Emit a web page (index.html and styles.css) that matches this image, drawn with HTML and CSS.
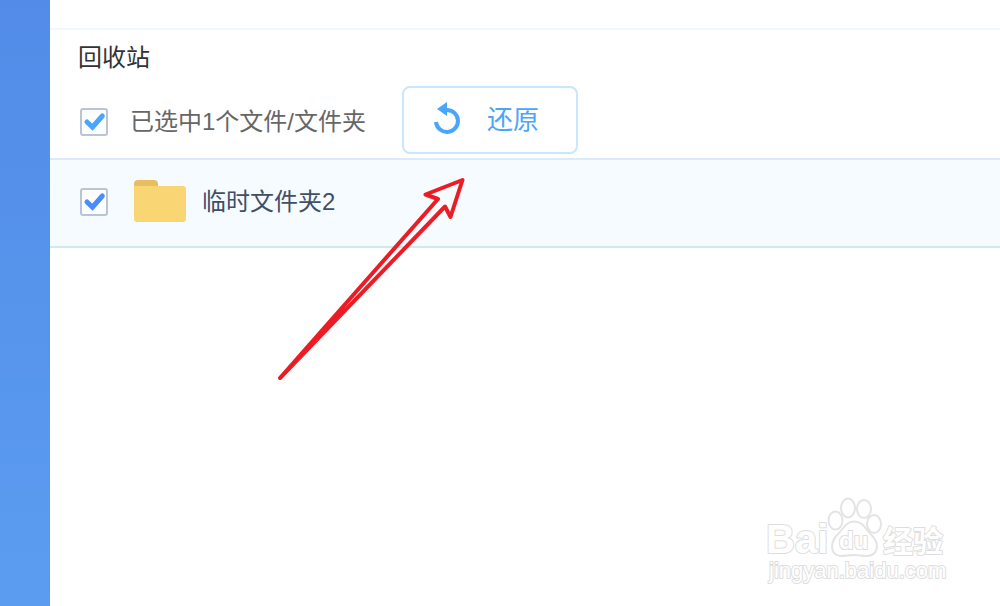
FILE: index.html
```html
<!DOCTYPE html>
<html lang="zh-CN">
<head>
<meta charset="utf-8">
<meta name="viewport" content="width=device-width, initial-scale=1">
<title>回收站</title>
<link rel="stylesheet" href="styles.css">
</head>
<body class="app">
<aside class="sidebar"></aside>
<main class="main">
  <div class="topbar"></div>
  <h1 class="title">回收站</h1>
  <div class="toolbar">
    <span class="check check-all">
      <input class="check-input" type="checkbox" id="all" checked>
      <svg class="check-mark" viewBox="0 0 28 28" aria-hidden="true"><path d="M7 14l5.500 5.200L22.300 8"/></svg>
    </span>
    <label class="toolbar-label" for="all">已选中1个文件/文件夹</label>
    <button class="restore" type="button">
      <svg class="restore-icon" viewBox="0 0 28 36" aria-hidden="true">
        <path class="restore-arc" d="M13 8H14A11 11 0 1 1 3 20"/>
        <path class="restore-head" d="M14 0v14L4 7z"/>
      </svg>
      <span>还原</span>
    </button>
  </div>
  <ul class="files">
    <li class="file">
      <span class="check check-file">
        <input class="check-input" type="checkbox" id="file" checked>
        <svg class="check-mark" viewBox="0 0 28 28" aria-hidden="true"><path d="M7 14l5.500 5.200L22.300 8"/></svg>
      </span>
      <svg class="folder" viewBox="0 0 52 44" aria-hidden="true">
        <path fill="#e7bf61" d="M0 12V5q0-4 4-4h16q4 0 4 4v7z"/>
        <path fill="#f9d673" d="M0 7h49q3 0 3 3v30q0 3-3 3H3q-3 0-3-3z"/>
      </svg>
      <label class="file-name" for="file">临时文件夹2</label>
    </li>
  </ul>
</main>
<svg class="arrow" viewBox="270 170 200 216" aria-hidden="true">
  <path d="M280 378L438 199L425.500 194.500L462.500 180L450.500 217L445 206.500Z"/>
</svg>
<svg class="watermark" viewBox="760 490 192 100" role="img" aria-label="Baidu经验">
  <g class="paw">
    <ellipse cx="835.500" cy="520.500" rx="7" ry="9"/>
    <ellipse cx="848" cy="508" rx="7" ry="9.500"/>
    <ellipse cx="864" cy="509" rx="7" ry="9"/>
    <ellipse cx="874" cy="524" rx="7" ry="9"/>
    <path d="M854 521.500c-6 0-9 4-12 8-4 5-10 9-10 17 0 6 4 9.500 9 9.500 5 0 8-1 13-1s8 1 13 1c6 0 10-4 10-10 0-7-6-11-10-16-3-4-6-8.500-13-8.500z"/>
  </g>
  <text class="mark mark-logo" x="766" y="553">Bai</text>
  <text class="mark mark-du" x="839" y="549">du</text>
  <text class="mark mark-cn" x="883" y="552">经验</text>
  <text class="mark mark-url" x="769" y="578">jingyan.baidu.com</text>
</svg>
</body>
</html>
```
FILE: styles.css
```css
* { box-sizing: border-box; }

.app {
  display: flex;
  min-height: 100vh;
  margin: 0;
  background: #fff;
  font: 24px/36px "Liberation Sans", "Noto Sans CJK SC", sans-serif;
}

.sidebar {
  flex: 0 0 50px;
  background: linear-gradient(#528ce8, #5b9cf0);
}

.main { flex: 1; min-width: 0; }

.topbar { height: 30px; border-bottom: 2px solid #f2f6fd; }

.title {
  margin: 0;
  padding: 10px 28px;
  color: #333;
  font-size: 24px;
  font-weight: 400;
}

.toolbar {
  display: flex;
  align-items: center;
  padding: 0 30px 4px;
}

.toolbar-label { margin: 4px 36px 0 22px; color: #666; }

.check { position: relative; display: block; width: 28px; height: 28px; }
.toolbar .check { margin-top: 4px; }
.check-all { color: #4aa6fb; }
.check-file { color: #4b8df8; }

.check-input {
  display: block;
  width: 28px;
  height: 28px;
  margin: 0;
  appearance: none;
  border: 2px solid #b9c4d7;
  border-radius: 3px;
  background: #fbfdff;
}

.check-mark { position: absolute; inset: 0; pointer-events: none; }

.check-mark path {
  fill: none;
  stroke: currentColor;
  stroke-width: 5;
  stroke-linecap: round;
  stroke-linejoin: miter;
}

.check-input:not(:checked) + .check-mark { display: none; }

.restore {
  display: flex;
  align-items: center;
  gap: 26px;
  height: 68px;
  padding: 0 37px 0 29px;
  border: 2px solid #c8e7fd;
  border-radius: 8px;
  background: #fff;
  color: #4aa6fb;
  font: inherit;
  font-size: 26px;
}

.restore-icon { width: 28px; height: 36px; }
.restore-arc { fill: none; stroke: currentColor; stroke-width: 4; }
.restore-head { fill: currentColor; }

.files { margin: 0; padding: 0; list-style: none; }

.file {
  display: flex;
  align-items: center;
  height: 90px;
  padding: 0 30px;
  border-top: 2px solid #dce9fb;
  border-bottom: 2px solid #d0e8f8;
  background: #f6fbff;
}

.file .check { margin-bottom: 2px; }
.folder { width: 52px; height: 44px; margin: 0 16px 4px 26px; }
.file-name { margin-bottom: 2px; color: #424e67; }

.arrow {
  position: absolute;
  top: 170px;
  left: 270px;
  width: 200px;
  height: 216px;
  pointer-events: none;
}

.arrow path {
  fill: none;
  stroke: #ed1c24;
  stroke-width: 4;
  stroke-linejoin: round;
}

.watermark {
  position: absolute;
  right: 48px;
  bottom: 16px;
  width: 192px;
  height: 100px;
}

.paw { fill: #fff; stroke: #e4e4e4; stroke-width: 2; }

.mark {
  fill: #fff;
  stroke: #dedede;
  stroke-width: 2;
  stroke-linejoin: round;
  paint-order: stroke;
  font-family: "Liberation Sans", "Noto Sans CJK SC", sans-serif;
}

.mark-logo { font-size: 40px; font-weight: 700; }
.mark-du { font-size: 24px; font-weight: 700; }
.mark-cn { font-size: 30px; font-weight: 700; }
.mark-url { font-size: 22px; }
```
